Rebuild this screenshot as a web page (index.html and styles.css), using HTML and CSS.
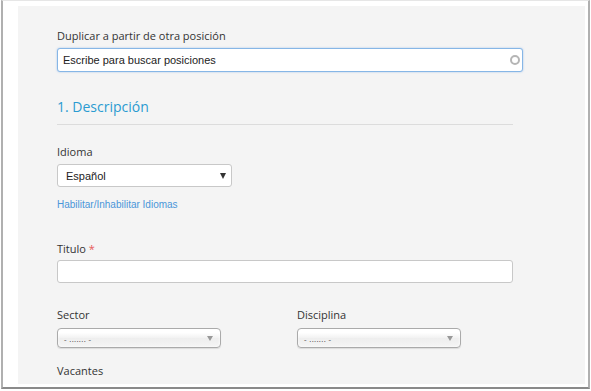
FILE: index.html
```html
<!DOCTYPE html>
<html lang="es">
<head>
<meta charset="utf-8">
<link rel="stylesheet" href="styles.css">
</head>
<body>
<div class="window">
  <div class="panel">
    <div class="field">
      <label class="label">Duplicar a partir de otra posición</label>
      <div class="search">
        <span class="search-text">Escribe para buscar posiciones</span>
        <span class="ring"></span>
      </div>
    </div>

    <h2 class="section-title">1. Descripción</h2>
    <div class="rule"></div>

    <div class="field lang">
      <label class="label">Idioma</label>
      <div class="select-lang">
        <span>Español</span>
        <span class="caret"></span>
      </div>
      <a class="link">Habilitar/Inhabilitar Idiomas</a>
    </div>

    <div class="field titulo">
      <label class="label">Titulo <span class="req">*</span></label>
      <div class="text-input"></div>
    </div>

    <div class="row">
      <div class="col">
        <label class="label">Sector</label>
        <div class="chosen"><span class="ph">- ....... -</span><span class="tri"></span></div>
      </div>
      <div class="col">
        <label class="label">Disciplina</label>
        <div class="chosen"><span class="ph">- ....... -</span><span class="tri"></span></div>
      </div>
    </div>

    <div class="field vac">
      <label class="label">Vacantes</label>
    </div>
  </div>
</div>
</body>
</html>
```
FILE: styles.css
```css
html, body {
  margin: 0;
  padding: 0;
  background: #ffffff;
}
body {
  font-family: "Open Sans", "DejaVu Sans", sans-serif;
  color: #333;
}
.window {
  box-sizing: border-box;
  margin-left: 1px;
  width: 589px;
  height: 389px;
  border-top: 1px solid #e6e6e6;
  border-left: 2px solid #b0b0b0;
  border-right: 2px solid #b0b0b0;
  border-bottom: 2px solid #8a8a8a;
  padding: 5px 3px 3px 15px;
  background: #fff;
}
.panel {
  box-sizing: border-box;
  height: 100%;
  background: #f4f4f4;
  padding: 21px 0 0 39px;
  overflow: hidden;
}
.label {
  display: block;
  font-size: 11px;
  line-height: 17px;
  color: #333;
}
.search {
  box-sizing: border-box;
  margin-top: 4px;
  width: 466px;
  height: 24px;
  background: #fff;
  border: 1px solid #86b6e6;
  border-radius: 3px;
  box-shadow: 0 0 2px rgba(102, 160, 230, 0.6);
  display: flex;
  align-items: center;
  justify-content: space-between;
  padding: 0 2px 0 5px;
}
.search-text {
  font-family: "Liberation Sans", Arial, sans-serif;
  font-size: 11px;
  color: #222;
}
.ring {
  box-sizing: border-box;
  width: 10px;
  height: 10px;
  border: 2px solid #b5b5b5;
  border-radius: 50%;
}
.section-title {
  margin: 25px 0 0;
  font-size: 14px;
  font-weight: 400;
  line-height: 20px;
  color: #2a9bd1;
}
.rule {
  margin-top: 7px;
  width: 456px;
  height: 1px;
  background: #dcdcdc;
}
.lang {
  margin-top: 18px;
}
.select-lang {
  box-sizing: border-box;
  margin-top: 4px;
  width: 175px;
  height: 23px;
  background: #fff;
  border: 1px solid #c8c8c8;
  border-radius: 3px;
  display: flex;
  align-items: center;
  justify-content: space-between;
  padding: 0 5px 0 8px;
  font-family: "Liberation Sans", Arial, sans-serif;
  font-size: 11px;
  color: #222;
}
.caret {
  width: 0;
  height: 0;
  border-left: 3.5px solid transparent;
  border-right: 3.5px solid transparent;
  border-top: 6px solid #333;
}
.link {
  display: block;
  margin-top: 11px;
  font-family: "Liberation Sans", Arial, sans-serif;
  font-size: 10px;
  line-height: 13px;
  color: #4a96d9;
}
.titulo {
  margin-top: 29px;
}
.req {
  color: #e8585a;
}
.text-input {
  box-sizing: border-box;
  margin-top: 3px;
  width: 456px;
  height: 23px;
  background: #fff;
  border: 1px solid #c8c8c8;
  border-radius: 3px;
}
.row {
  display: flex;
  gap: 76px;
  margin-top: 23px;
}
.col {
  width: 164px;
}
.chosen {
  box-sizing: border-box;
  margin-top: 5px;
  width: 164px;
  height: 20px;
  border: 1px solid #aaa;
  border-radius: 4px;
  background: linear-gradient(#ffffff 20%, #f2f2f2 50%, #eeeeee 52%, #f4f4f4);
  box-shadow: 0 0 3px #fff inset, 0 1px 1px rgba(0,0,0,0.1);
  display: flex;
  align-items: center;
  justify-content: space-between;
  padding: 0 7px 0 6px;
}
.ph {
  font-size: 8px;
  color: #444;
  letter-spacing: 0.3px;
}
.tri {
  width: 0;
  height: 0;
  border-left: 3px solid transparent;
  border-right: 3px solid transparent;
  border-top: 5px solid #999;
}
.vac {
  margin-top: 14px;
}
```
